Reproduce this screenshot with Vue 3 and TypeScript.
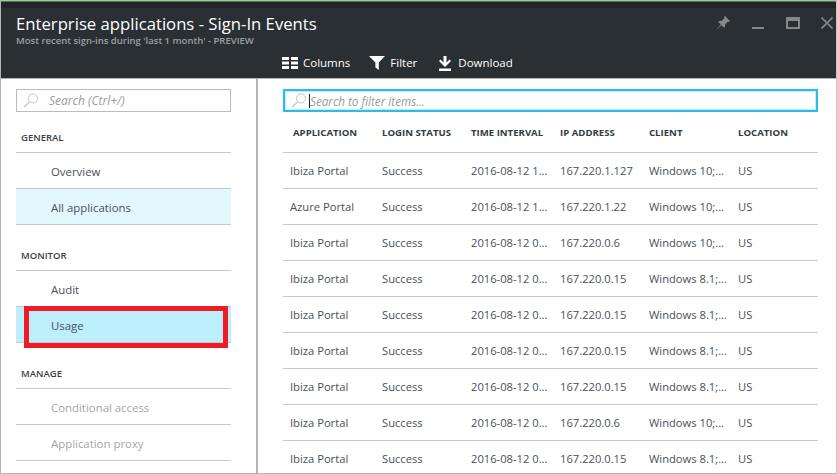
<script setup lang="ts">
const groups = [
  {
    title: 'GENERAL',
    items: [
      { label: 'Overview', cls: '' },
      { label: 'All applications', cls: 'soft' },
    ],
  },
  {
    title: 'MONITOR',
    items: [
      { label: 'Audit', cls: '' },
      { label: 'Usage', cls: 'active' },
    ],
  },
  {
    title: 'MANAGE',
    items: [
      { label: 'Conditional access', cls: 'off' },
      { label: 'Application proxy', cls: 'off' },
    ],
  },
];
const columns = ['APPLICATION', 'LOGIN STATUS', 'TIME INTERVAL', 'IP ADDRESS', 'CLIENT', 'LOCATION'];
const rows = [
  ['Ibiza Portal', 'Success', '2016-08-12 1...', '167.220.1.127', 'Windows 10;...', 'US'],
  ['Azure Portal', 'Success', '2016-08-12 1...', '167.220.1.22', 'Windows 10;...', 'US'],
  ['Ibiza Portal', 'Success', '2016-08-12 0...', '167.220.0.6', 'Windows 10;...', 'US'],
  ['Ibiza Portal', 'Success', '2016-08-12 0...', '167.220.0.15', 'Windows 8.1;...', 'US'],
  ['Ibiza Portal', 'Success', '2016-08-12 0...', '167.220.0.15', 'Windows 8.1;...', 'US'],
  ['Ibiza Portal', 'Success', '2016-08-12 0...', '167.220.0.15', 'Windows 8.1;...', 'US'],
  ['Ibiza Portal', 'Success', '2016-08-12 0...', '167.220.0.15', 'Windows 8.1;...', 'US'],
  ['Ibiza Portal', 'Success', '2016-08-12 0...', '167.220.0.6', 'Windows 10;...', 'US'],
  ['Ibiza Portal', 'Success', '2016-08-12 0...', '167.220.0.15', 'Windows 8.1;...', 'US'],
];
</script>

<template>
  <div class="blade">
    <header class="head">
      <div class="strip"></div>
      <div class="title-row">
        <div>
          <h1>Enterprise applications - Sign-In Events</h1>
          <p>Most recent sign-ins during 'last 1 month' - PREVIEW</p>
        </div>
        <div class="win-btns">
          <svg width="14" height="14" viewBox="0 0 14 14"><path d="M9 0l5 5-1 1-1.200-.3-2.600 2.600-.2 2.500-1 1-2.600-2.600L0 14l4.800-5.400L2.200 6l1-1 2.500-.2 2.600-2.600L8 1z" fill="#84878a"/></svg>
          <svg width="12" height="14" viewBox="0 0 12 14"><rect x="0" y="11" width="12" height="2" fill="#84878a"/></svg>
          <svg width="14" height="14" viewBox="0 0 14 14"><path d="M0 1h14v12H0z M2 5v6h10V5z" fill="#84878a" fill-rule="evenodd"/></svg>
          <svg class="close" width="12" height="12" viewBox="0 0 12 12"><path d="M.5.500l11 11M11.500.500l-11 11" stroke="#84878a" stroke-width="1.600" fill="none"/></svg>
        </div>
      </div>
      <div class="commands">
        <span class="cmd">
          <svg width="16" height="12" viewBox="0 0 16 12"><path d="M0 0h7v3H0zM9 0h7v3H9zM0 4.500h7v3H0zM9 4.500h7v3H9zM0 9h7v3H0zM9 9h7v3H9z" fill="#fff"/></svg>
          Columns
        </span>
        <span class="cmd">
          <svg width="16" height="14" viewBox="0 0 16 14"><path d="M0 0h16L9.800 6.500V14L6.400 11.500V6.500z" fill="#fff"/></svg>
          Filter
        </span>
        <span class="cmd">
          <svg width="12" height="15" viewBox="0 0 12 15"><path d="M4.500 0h3v6.500L10.500 3.500 12 5l-6 6-6-6 1.500-1.500 3 3zM0 12.500h12V15H0z" fill="#fff"/></svg>
          Download
        </span>
      </div>
    </header>

    <div class="body">
      <aside class="side">
        <div class="search">
          <svg class="glass" width="16" height="15" viewBox="0 0 16 15"><circle cx="10" cy="5.500" r="4.500" fill="none" stroke="#c4c4c4"/><path d="M6.500 9L1 14" stroke="#c4c4c4" stroke-width="1.300"/></svg>
          <span>Search (Ctrl+/)</span>
        </div>
        <section v-for="g in groups" :key="g.title" class="group">
          <h2>{{ g.title }}</h2>
          <div v-for="it in g.items" :key="it.label" class="item" :class="it.cls">{{ it.label }}</div>
        </section>
      </aside>

      <main class="main">
        <div class="filter">
          <svg class="glass" width="16" height="15" viewBox="0 0 16 15"><circle cx="10" cy="5.500" r="4.500" fill="none" stroke="#c4c4c4"/><path d="M6.500 9L1 14" stroke="#c4c4c4" stroke-width="1.300"/></svg>
          <i class="caret"></i>
          <span>Search to filter items...</span>
        </div>
        <div class="grid head-row">
          <div v-for="c in columns" :key="c">{{ c }}</div>
        </div>
        <div v-for="(r, i) in rows" :key="i" class="grid row">
          <div v-for="(v, j) in r" :key="j">{{ v }}</div>
        </div>
      </main>
    </div>
  </div>
</template>

<style>
html, body { margin: 0; background: #fff; overflow: hidden; }
</style>

<style scoped>
.blade {
  width: 837px; height: 474px; box-sizing: border-box; overflow: hidden;
  display: flex; flex-direction: column;
  border: 1px solid #b4b4b4; border-right-color: #c8c8c8;
  font-family: "Open Sans", "Noto Sans", sans-serif; color: #3e4650;
}
.head {
  height: 78px; flex: none; box-sizing: border-box;
  background: #2a2f34; border-bottom: 1px solid #b4b4b4;
  color: #fff;
}
.strip { height: 7px; box-sizing: border-box; background: #212428; border-top: 1px solid #2f8f2f; }
.title-row { display: flex; justify-content: space-between; padding: 5px 0 0 15px; height: 45px; box-sizing: border-box; }
h1 { margin: 0; font-size: 16.700px; font-weight: 400; line-height: 22px; white-space: nowrap; }
.title-row p { margin: 0; font-size: 9.500px; line-height: 12px; font-weight: 600; color: #9ba0a5; white-space: nowrap; }
.win-btns { display: flex; align-items: center; gap: 22px; height: 20px; padding-right: 3px; }
.win-btns .close { margin-left: -1px; }
.commands { display: flex; padding-left: 281px; }
.cmd { display: flex; align-items: center; gap: 5px; font-size: 11.500px; line-height: 20px; }
.cmd + .cmd { margin-left: 19px; }
.cmd:last-child { margin-left: 22px; gap: 7px; }
.body { flex: 1; display: flex; min-height: 0; }
.side { width: 257px; flex: none; box-sizing: border-box; border-right: 2px solid #b4b4b4; padding: 10px 25px 0 15px; }
.search {
  height: 23px; box-sizing: border-box; border: 1px solid #bcbcbc;
  display: flex; align-items: center; padding-left: 6px; gap: 10px;
  font-size: 12px; font-style: italic; color: #9a9a9a;
}
h2 {
  margin: 0; height: 45px; box-sizing: border-box; padding: 25px 0 0 5px;
  font-size: 9.500px; line-height: 12px; font-weight: 600; color: #3c3f4a;
}
.group:first-of-type h2 { padding-top: 20px; height: 40px; }
.item {
  height: 36px; box-sizing: border-box; border-top: 1px solid #c8c8c8; padding-top: 1px;
  padding-left: 35px; line-height: 36px; font-size: 11.400px; color: #4a5058;
}
.item:last-child { height: 37px; border-bottom: 1px solid #c8c8c8; }
.item.soft { background: #e3f7fe; }
.item.off { color: #a6a6a6; }
.item.active { background: #bdeefb; position: relative; }
.item.active::after {
  content: ""; position: absolute; left: 8px; right: 3px; top: -1px; bottom: -6px;
  border: 5px solid #ee1c25;
}
.main { flex: 1; min-width: 0; padding: 10px 18px 0 25px; overflow: hidden; }
.filter {
  height: 23px; box-sizing: border-box; border: 2px solid #2bbde8; box-shadow: inset 0 0 0 1px #bdeefb;
  display: flex; align-items: center; padding-left: 6px;
  font-size: 11.700px; font-style: italic; color: #9a9a9a;
}
.caret { width: 1px; height: 14px; background: #222; margin-left: 2px; }
.grid { display: grid; grid-template-columns: 99px 89px 89px 89px 89px 1fr; white-space: nowrap; }
.head-row {
  height: 41px; box-sizing: border-box; padding-top: 10px;
  font-size: 9.600px; line-height: 22px; font-weight: 700; color: #333b44;
  border-bottom: 1px solid #c8c8c8;
}
.head-row > div:first-child { padding-left: 10px; }
.row {
  height: 36px; box-sizing: border-box; line-height: 35px;
  font-size: 11.200px; border-bottom: 1px solid #c8c8c8; color: #4a5058;
}
.row > div:first-child { padding-left: 7px; }
</style>
